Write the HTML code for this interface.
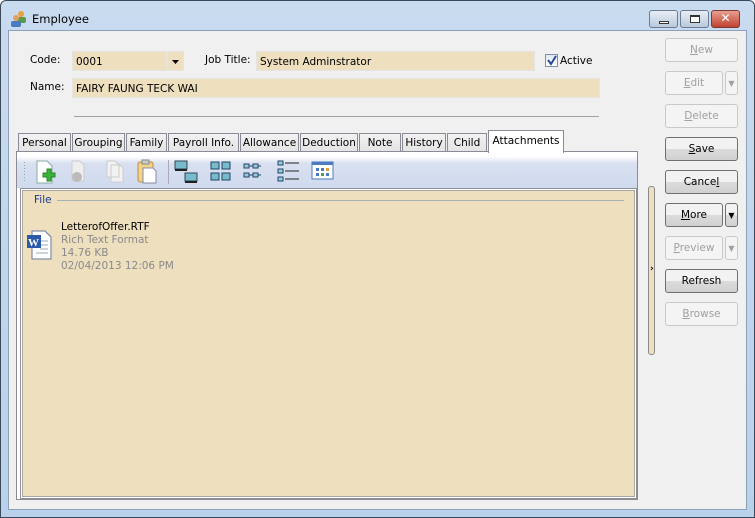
<!DOCTYPE html><html><head><style>
*{margin:0;padding:0;box-sizing:border-box}
body{width:755px;height:518px;overflow:hidden;font-family:"DejaVu Sans","Liberation Sans",sans-serif;font-size:10.5px;color:#000;background:#fff}
.win{position:absolute;left:0;top:0;width:755px;height:518px;background:linear-gradient(#c9dbef,#b9d1ea);border:1px solid #3a4a5a;border-radius:6px 6px 0 0}
.client{position:absolute;left:8px;top:30px;width:739px;height:480px;background:#f0f0f0;border:1px solid #8ca0b8}
.a{position:absolute}
.in{position:absolute;background:#eedfbf;border:1px solid #e4e4e4;padding:3px 3px;height:20px;line-height:14px}
.btn{position:absolute;left:665px;width:73px;height:24px;border:1px solid #707070;border-radius:3px;background:linear-gradient(#f2f2f2 50%,#dcdcdc 50%,#d0d0d0);text-align:center;line-height:23px}
.dis{border-color:#c9c9c9;background:#f4f4f4;color:#a0a0a0}
.tab{position:absolute;top:133px;height:19px;border:1px solid #898c95;border-bottom:none;background:linear-gradient(#f2f2f2,#e3e3e3);text-align:center;line-height:18px}
.g{color:#8a8a8a}
</style></head><body>
<div class="win">
<svg class="a" style="left:9px;top:9px" width="18" height="18"><circle cx="11" cy="4" r="3" fill="#e8a040"/><rect x="7" y="7" width="9" height="6" rx="2" fill="#5a9a4a"/><circle cx="6" cy="8" r="3" fill="#e0a060"/><rect x="1" y="11" width="10" height="6" rx="2" fill="#4a7ac0"/></svg>
<div class="a" style="left:31px;top:11px;font-size:11.5px">Employee</div>
<div class="a" style="left:648px;top:9px;width:29px;height:18px;border:1px solid #6c7c90;border-radius:3px;background:linear-gradient(#e8eef6,#b8c8dc)"><div class="a" style="left:9px;top:10px;width:10px;height:3px;border:1px solid #333;background:#fff"></div></div>
<div class="a" style="left:679px;top:9px;width:29px;height:18px;border:1px solid #6c7c90;border-radius:3px;background:linear-gradient(#e8eef6,#b8c8dc)"><div class="a" style="left:9px;top:4px;width:10px;height:8px;border:1px solid #333;border-top-width:2px;background:#fff"></div></div>
<div class="a" style="left:710px;top:9px;width:29px;height:18px;border:1px solid #7a3a30;border-radius:3px;background:linear-gradient(#e8a090,#c04030);color:#fff;font-weight:bold;text-align:center;line-height:15px;font-size:12px">✕</div>
</div>
<div class="client"></div>
<div class="a" style="left:30px;top:54px">Code:</div>
<div class="in" style="left:72px;top:51px;width:95px">0001</div>
<div class="a" style="left:167px;top:51px;width:17px;height:20px;background:#eedfbf;border:1px solid #e4e4e4"><svg class="a" style="left:4px;top:8px" width="8" height="5"><path d="M0 0h7L3.5 4z" fill="#000"/></svg></div>
<div class="a" style="left:205px;top:54px">Job Title:</div>
<div class="in" style="left:256px;top:51px;width:279px">System Adminstrator</div>
<div class="a" style="left:545px;top:54px;width:13px;height:13px;border:1px solid #8090a8;background:linear-gradient(#e0e8f4,#fff)"><svg width="11" height="11"><path d="M2 5l3 4 5-8" stroke="#2a4a9a" stroke-width="2" fill="none"/></svg></div>
<div class="a" style="left:560px;top:55px">Active</div>
<div class="a" style="left:30px;top:81px">Name:</div>
<div class="in" style="left:72px;top:78px;width:528px">FAIRY FAUNG TECK WAI</div>
<div class="a" style="left:74px;top:116px;width:525px;height:1px;background:#a0a0a0"></div>

<div class="tab" style="left:18px;width:53px">Personal</div>
<div class="tab" style="left:72px;width:53px">Grouping</div>
<div class="tab" style="left:126px;width:41px">Family</div>
<div class="tab" style="left:168px;width:71px">Payroll Info.</div>
<div class="tab" style="left:240px;width:59px">Allowance</div>
<div class="tab" style="left:300px;width:58px">Deduction</div>
<div class="tab" style="left:359px;width:42px">Note</div>
<div class="tab" style="left:402px;width:44px">History</div>
<div class="tab" style="left:447px;width:40px">Child</div>
<div class="a" style="left:16px;top:151px;width:622px;height:349px;border:1px solid #898c95;background:#fff"></div>
<div class="tab" style="left:488px;top:130px;width:76px;height:23px;background:#fff;line-height:20px;z-index:2">Attachments</div>
<div class="a" style="left:17px;top:153px;width:620px;height:35px;background:linear-gradient(#fff 0,#fff 10%,#d8e0f0 30%,#d0daef)"></div>
<div class="a" style="left:22px;top:190px;width:613px;height:307px;background:#eedfbf;border:1px solid #a8a8a8"></div>
<div class="a" style="left:20px;top:188px;width:617px;height:311px;border:1px solid #909090"></div>
<svg class="a" style="left:22px;top:158px" width="320" height="28">
<g fill="#9aa"><rect x="2" y="4" width="1" height="1"/><rect x="2" y="7" width="1" height="1"/><rect x="2" y="10" width="1" height="1"/><rect x="2" y="13" width="1" height="1"/><rect x="2" y="16" width="1" height="1"/><rect x="2" y="19" width="1" height="1"/><rect x="2" y="22" width="1" height="1"/></g>
<path d="M15 3h10l5 5v17H15z" fill="#fff" stroke="#8aa"/><path d="M21 15h4v-4h4v4h4v4h-4v4h-4v-4h-4z" fill="#3bb33b" stroke="#2a8a2a"/>
<path d="M50 3h8l4 4v16H50z" fill="#eee" stroke="#ccc"/><circle cx="55" cy="19" r="5" fill="#bbb"/>
<path d="M85 3h8l4 4v12H85z M89 7h9l3 3v14H89z" fill="#f2f2f2" stroke="#ccc"/>
<rect x="116" y="4" width="15" height="20" rx="2" fill="#f3d38a" stroke="#b89040"/><rect x="120" y="2" width="7" height="4" fill="#ccc" stroke="#888"/><path d="M121 10h10l3 3v12h-13z" fill="#fff" stroke="#88a"/>
<rect x="146" y="2" width="1" height="24" fill="#aab"/>
<rect x="153" y="3" width="12" height="8" fill="#7bc" stroke="#345"/><rect x="153" y="11" width="12" height="2" fill="#222"/><rect x="163" y="15" width="12" height="8" fill="#7bc" stroke="#345"/><rect x="163" y="23" width="12" height="2" fill="#222"/>
<g fill="#7bc" stroke="#246"><rect x="189" y="4" width="8" height="7"/><rect x="200" y="4" width="8" height="7"/><rect x="189" y="15" width="8" height="7"/><rect x="200" y="15" width="8" height="7"/></g>
<g fill="#9cd" stroke="#246"><rect x="222" y="6" width="5" height="4"/><rect x="231" y="6" width="5" height="4"/><rect x="222" y="15" width="5" height="4"/><rect x="231" y="15" width="5" height="4"/></g><g stroke="#246"><path d="M227 8h4M236 8h3M227 17h4M236 17h3"/></g>
<g fill="#9cd" stroke="#246"><rect x="256" y="3" width="5" height="4"/><rect x="256" y="11" width="5" height="4"/><rect x="256" y="19" width="5" height="4"/></g><g stroke="#222"><path d="M263 5h14M263 13h14M263 21h14"/></g>
<rect x="290" y="4" width="21" height="17" fill="#fff" stroke="#4a7ac0"/><rect x="290" y="4" width="21" height="3" fill="#4a7ac0"/><g fill="#4a7ac0"><rect x="294" y="10" width="3" height="3"/><rect x="299" y="10" width="3" height="3"/><rect x="304" y="10" width="3" height="3" fill="#e0a040"/><rect x="294" y="15" width="3" height="3"/><rect x="299" y="15" width="3" height="3" fill="#5a9a4a"/><rect x="304" y="15" width="3" height="3"/></g>
</svg>
<div class="a" style="left:34px;top:194px;color:#1a3a8a">File</div>
<div class="a" style="left:57px;top:200px;width:567px;height:1px;background:#a8b0b8"></div>
<svg class="a" style="left:26px;top:230px" width="30" height="32"><path d="M6 1h13l6 6v22H6z" fill="#fff" stroke="#6a7a9a"/><g stroke="#9ab"><path d="M14 11h8M14 15h8M14 19h8M10 23h12"/></g><rect x="1" y="5" width="14" height="13" fill="#2a5aa8"/><text x="2" y="16" font-size="11" font-weight="bold" fill="#fff" font-family="Liberation Serif">W</text></svg>
<div class="a" style="left:61px;top:221px;line-height:13px">LetterofOffer.RTF<br><span class="g">Rich Text Format<br>14.76 KB<br>02/04/2013 12:06 PM</span></div>
<div class="a" style="left:648px;top:186px;width:7px;height:169px;border:1px solid #8a8a8a;border-radius:3px;background:#eedfbf"></div>
<div class="a" style="left:650px;top:264px;font-size:9px;font-weight:bold">›</div>

<div class="btn dis" style="top:38px"><u>N</u>ew</div>
<div class="btn dis" style="top:71px;width:58px"><u>E</u>dit</div>
<div class="btn dis" style="top:71px;left:725px;width:13px;font-size:8px">▼</div>
<div class="btn dis" style="top:104px"><u>D</u>elete</div>
<div class="btn" style="top:137px"><u>S</u>ave</div>
<div class="btn" style="top:170px">Cance<u>l</u></div>
<div class="btn" style="top:203px;width:58px"><u>M</u>ore</div>
<div class="btn" style="top:203px;left:725px;width:13px;font-size:8px">▼</div>
<div class="btn dis" style="top:236px;width:58px"><u>P</u>review</div>
<div class="btn dis" style="top:236px;left:725px;width:13px;font-size:8px">▼</div>
<div class="btn" style="top:269px">Refresh</div>
<div class="btn dis" style="top:302px"><u>B</u>rowse</div>
</body></html>
